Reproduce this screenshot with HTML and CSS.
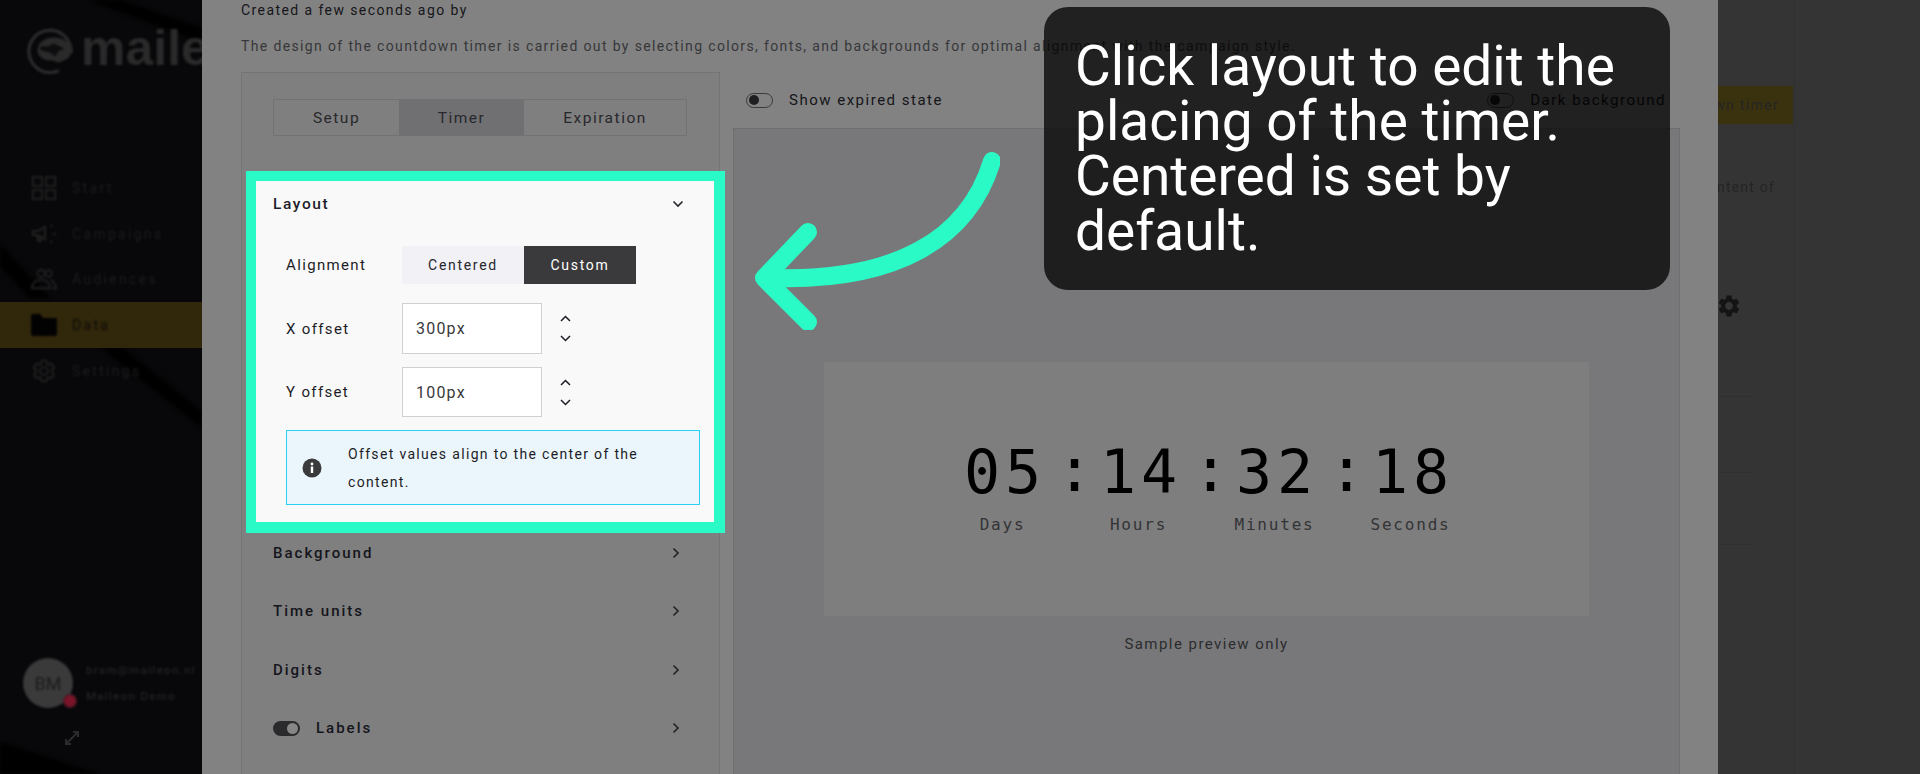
FILE: index.html
```html
<!DOCTYPE html>
<html lang="en">
<head>
<meta charset="utf-8">
<title>Countdown timer</title>
<link rel="stylesheet" href="styles.css">
</head>
<body>
<div class="app">
  <aside class="sidebar">
    <svg class="side-bands" width="202" height="774" viewBox="0 0 202 774"><path d="M88 0h32l82 28v14zM0 244l50 54H30L0 266zM100 347h22l66 53 14 12v16zM0 742l100 32H0z" fill="#000"/></svg>
    <div class="logo">
      <svg class="logo-mark" width="48" height="48" viewBox="0 0 50 50"><path d="M47 27A22 22 0 1 0 33 47" fill="none" stroke="#2a2a2b" stroke-width="3.500" stroke-linecap="round"/><path d="M47 27c0-10-8-15-18-15-10 0-17 6-17 13 0 8 8 11 14 11 4 0 7 3 9 2 2-2 12-3 12-11z" fill="#2a2a2b"/><path d="M15 21h9l4-3 7 3 5 3-6 2-4 6-4-4-11-3z" fill="#0d0d0f"/></svg>
      <span class="logo-name">maileon</span>
    </div>
    <nav class="nav">
      <div class="nav-item"><svg width="24" height="24" viewBox="0 0 24 24" fill="none" stroke="#202021" stroke-width="2"><path d="M1 1h9v9H1zM14 1h9v9h-9zM1 14h9v9H1zM14 14h9v9h-9z"/></svg><span>Start</span></div>
      <div class="nav-item"><svg width="26" height="24" viewBox="0 0 26 24" fill="none" stroke="#202021" stroke-width="2.200"><path d="M2 9h5l7-4v12l-7-4H2zM6 13l1 6h3l-1-5M20 3l1 2M20 19l1 2M22 12h3"/></svg><span>Campaigns</span></div>
      <div class="nav-item"><svg width="28" height="24" viewBox="0 0 28 24" fill="none" stroke="#202021" stroke-width="2"><circle cx="11" cy="6" r="4"/><circle cx="19" cy="6" r="3.500"/><path d="M1 22c0-6 5-9 10-9s9 3 10 9zM21 13c3 1 5 4 6 9h-4"/></svg><span>Audiences</span></div>
      <div class="nav-item nav-active"><svg width="26" height="22" viewBox="0 0 26 22"><path d="M0 2q0-2 2-2h7l3 4h12q2 0 2 2v14q0 2-2 2H2q-2 0-2-2z" fill="#020203"/></svg><span>Data</span></div>
      <div class="nav-item"><svg width="26" height="26" viewBox="0 0 24 24" fill="none" stroke="#202021" stroke-width="1.800"><path d="M19.14 12.94c.04-.3.06-.61.06-.94 0-.32-.02-.64-.07-.94l2.03-1.58c.18-.14.23-.41.12-.61l-1.92-3.32c-.12-.22-.37-.29-.59-.22l-2.39.96c-.5-.38-1.03-.7-1.62-.94l-.36-2.54c-.04-.24-.24-.41-.48-.41h-3.84c-.24 0-.43.17-.47.41l-.36 2.54c-.59.24-1.13.57-1.62.94l-2.39-.96c-.22-.08-.47 0-.59.22L2.74 8.87c-.12.21-.08.47.12.61l2.03 1.58c-.05.3-.09.63-.09.94s.02.64.07.94l-2.03 1.58c-.18.14-.23.41-.12.61l1.92 3.32c.12.22.37.29.59.22l2.39-.96c.5.38 1.03.7 1.62.94l.36 2.54c.05.24.24.41.48.41h3.84c.24 0 .44-.17.47-.41l.36-2.54c.59-.24 1.13-.56 1.62-.94l2.39.96c.22.08.47 0 .59-.22l1.92-3.32c.12-.22.07-.47-.12-.61l-2.01-1.58z"/><circle cx="12" cy="12" r="3.600"/></svg><span>Settings</span></div>
    </nav>
    <div class="user">
      <div class="avatar">BM<span class="avatar-badge"></span></div>
      <div class="user-text"><span>bram@maileon.nl</span><span>Maileon Demo</span></div>
    </div>
    <svg class="expand" width="16" height="16" viewBox="0 0 16 16" fill="none" stroke="#2b2b2c" stroke-width="2"><path d="M3 13L13 3M9 2h5v5M2 9v5h5"/></svg>
  </aside>

  <main class="modal">
    <p class="meta">Created a few seconds ago by</p>
    <p class="desc">The design of the countdown timer is carried out by selecting colors, fonts, and backgrounds for optimal alignment with the campaign style.</p>
    <div class="columns">
      <section class="panel">
        <div class="tabs">
          <div class="tab tab-setup">Setup</div>
          <div class="tab tab-timer">Timer</div>
          <div class="tab tab-exp">Expiration</div>
        </div>
        <div class="focus">
          <div class="acc-head"><span>Layout</span>
            <svg class="chev" width="12" height="8" viewBox="0 0 12 8" fill="none" stroke="#26262c" stroke-width="1.600"><path d="M1.500 1.500L6 6l4.500-4.500"/></svg>
          </div>
          <div class="form-row form-align">
            <span class="form-label">Alignment</span>
            <div class="seg"><span class="seg-off">Centered</span><span class="seg-on">Custom</span></div>
          </div>
          <div class="form-row form-x">
            <span class="form-label">X offset</span>
            <div class="field">300px</div>
            <div class="stepper">
              <svg width="11" height="7" viewBox="0 0 11 7" fill="none" stroke="#1d1d26" stroke-width="1.500"><path d="M1 6l4.500-4.500L10 6"/></svg>
              <svg width="11" height="7" viewBox="0 0 11 7" fill="none" stroke="#1d1d26" stroke-width="1.500"><path d="M1 1l4.500 4.500L10 1"/></svg>
            </div>
          </div>
          <div class="form-row form-y">
            <span class="form-label">Y offset</span>
            <div class="field">100px</div>
            <div class="stepper">
              <svg width="11" height="7" viewBox="0 0 11 7" fill="none" stroke="#1d1d26" stroke-width="1.500"><path d="M1 6l4.500-4.500L10 6"/></svg>
              <svg width="11" height="7" viewBox="0 0 11 7" fill="none" stroke="#1d1d26" stroke-width="1.500"><path d="M1 1l4.500 4.500L10 1"/></svg>
            </div>
          </div>
          <div class="info">
            <svg width="20" height="20" viewBox="0 0 20 20"><circle cx="10" cy="10" r="9.500" fill="#3a3a3c"/><rect x="8.800" y="8.500" width="2.400" height="6.500" fill="#fff"/><circle cx="10" cy="6" r="1.400" fill="#fff"/></svg>
            <p>Offset values align to the center of the content.</p>
          </div>
        </div>
        <div class="acc-list">
          <div class="acc-row"><span>Background</span><svg width="8" height="12" viewBox="0 0 8 12" fill="none" stroke="#222226" stroke-width="1.600"><path d="M1.500 1.500L6 6l-4.500 4.500"/></svg></div>
          <div class="acc-row"><span>Time units</span><svg width="8" height="12" viewBox="0 0 8 12" fill="none" stroke="#222226" stroke-width="1.600"><path d="M1.500 1.500L6 6l-4.500 4.500"/></svg></div>
          <div class="acc-row"><span>Digits</span><svg width="8" height="12" viewBox="0 0 8 12" fill="none" stroke="#222226" stroke-width="1.600"><path d="M1.500 1.500L6 6l-4.500 4.500"/></svg></div>
          <div class="acc-row"><span class="acc-toggle"><i class="toggle-on"></i>Labels</span><svg width="8" height="12" viewBox="0 0 8 12" fill="none" stroke="#222226" stroke-width="1.600"><path d="M1.500 1.500L6 6l-4.500 4.500"/></svg></div>
        </div>
      </section>
      <section class="preview-col">
        <div class="preview-bar">
          <label class="switch"><i class="toggle-off"></i>Show expired state</label>
          <label class="switch"><i class="toggle-off"></i>Dark background</label>
        </div>
        <div class="preview">
          <div class="timer-card">
            <div class="timer">
              <div class="unit"><b>05</b><span>Days</span></div><div class="colon">:</div>
              <div class="unit"><b>14</b><span>Hours</span></div><div class="colon">:</div>
              <div class="unit"><b>32</b><span>Minutes</span></div><div class="colon">:</div>
              <div class="unit"><b>18</b><span>Seconds</span></div>
            </div>
          </div>
          <p class="sample">Sample preview only</p>
        </div>
      </section>
    </div>
  </main>

  <aside class="strip">
    <div class="strip-btn"><span>Publish countdown timer</span></div>
    <p class="strip-text"><span>Edit the content of</span></p>
    <svg class="strip-gear" width="26" height="26" viewBox="0 0 24 24"><path fill="#141414" d="M19.14 12.94c.04-.3.06-.61.06-.94 0-.32-.02-.64-.07-.94l2.03-1.58c.18-.14.23-.41.12-.61l-1.920-3.320c-.12-.22-.37-.29-.59-.22l-2.390.96c-.5-.38-1.030-.7-1.620-.94l-.36-2.540c-.04-.24-.24-.41-.48-.41h-3.840c-.24 0-.43.17-.47.41l-.36 2.540c-.59.24-1.130.57-1.620.94l-2.390-.96c-.22-.08-.47 0-.59.22L2.740 8.870c-.12.21-.08.47.12.61l2.030 1.580c-.05.3-.09.63-.09.94s.02.64.07.94l-2.030 1.580c-.18.14-.23.41-.12.61l1.920 3.320c.12.22.37.29.59.22l2.390-.96c.5.38 1.030.7 1.620.94l.36 2.540c.05.24.24.41.48.41h3.840c.24 0 .44-.17.47-.41l.36-2.540c.59-.24 1.130-.56 1.620-.94l2.390.96c.22.08.47 0 .59-.22l1.920-3.320c.12-.22.07-.47-.12-.61l-2.010-1.580zM12 15.600c-1.980 0-3.600-1.620-3.600-3.600s1.620-3.600 3.600-3.600 3.600 1.620 3.600 3.600-1.620 3.600-3.600 3.600z"/></svg>
    <div class="strip-lines"><i></i><i></i><i></i></div>
  </aside>

  <div class="callout">Click layout to edit the placing of the timer. Centered is set by default.</div>
  <svg class="arrow" width="250" height="180" viewBox="750 150 250 180" fill="none" stroke="#2afbc6" stroke-width="18" stroke-linecap="round" stroke-linejoin="round"><path d="M992 161C968 240 895 281 775 278"/><path d="M808 232L764 278L808 322"/></svg>
</div>
</body>
</html>
```
FILE: styles.css
```css
* { box-sizing: border-box; }
html, body { margin: 0; height: 774px; overflow: hidden; }
body { font-family: Roboto, "Liberation Sans", sans-serif; background: #828282; }
p { margin: 0; }
i { display: block; }

.app { position: relative; display: flex; width: 1920px; height: 774px; overflow: hidden; }

/* Sidebar */
.sidebar { position: relative; flex: 0 0 202px; height: 774px; background: #08080a; overflow: hidden; }
.side-bands { position: absolute; left: 0; top: 0; filter: blur(2px); }
.logo { position: relative; display: flex; align-items: center; gap: 7px; padding: 26px 0 0 26px; white-space: nowrap; filter: blur(1.200px); }
.logo-mark { flex: none; }
.logo-name { font: 700 50px "Liberation Sans", sans-serif; color: #2a2a2b; line-height: 48px; margin-top: -4px; }
.nav { position: relative; display: flex; flex-direction: column; margin-top: 91px; }
.nav-item { display: flex; align-items: center; height: 45.800px; padding-left: 31px; gap: 15px; font-size: 14px; letter-spacing: 2.300px; color: #1c1c1d; }
.nav-item svg { flex: 0 0 26px; filter: blur(.8px); }
.nav-item span { filter: blur(1px); }
.nav-active { background: #31270b; color: #0c0c08; }
.user { position: absolute; left: 23px; top: 658px; display: flex; gap: 13px; align-items: center; filter: blur(.9px); }
.avatar { position: relative; display: flex; align-items: center; justify-content: center; width: 50px; height: 50px; border-radius: 50%; background: #3a3a3b; color: #1c1c1d; font-size: 18px; }
.avatar-badge { position: absolute; right: -4px; bottom: 0; width: 14px; height: 14px; border-radius: 50%; background: radial-gradient(#7a1428 45%, #3a1a22 75%); }
.user-text { display: flex; flex-direction: column; gap: 10px; font-size: 11.500px; font-weight: 500; letter-spacing: 1.300px; line-height: 16px; color: #232324; white-space: nowrap; }
.expand { position: absolute; left: 64px; top: 730px; filter: blur(.7px); }

/* Modal */
.modal { flex: 0 0 1516px; height: 774px; padding: 0 0 0 39px; background: #828282; overflow: hidden; }
.meta { font-size: 14px; letter-spacing: 1.420px; line-height: 20px; color: #16161a; white-space: nowrap; }
.desc { margin-top: 16px; font-size: 14px; letter-spacing: 1.365px; line-height: 20px; color: #37373a; white-space: nowrap; }
.columns { display: flex; margin-top: 16px; align-items: flex-start; }

.panel { flex: 0 0 479px; min-width: 0; height: 720px; padding-top: 26px; background: #7f7f7f; border: 1px solid #747476; }
.tabs { display: flex; width: 414px; height: 37px; margin-left: 31px; border: 1px solid #727274; font-size: 15.500px; letter-spacing: 1.500px; color: #28282c; }
.tab { display: flex; align-items: center; justify-content: center; }
.tab-setup { flex: 0 0 125px; }
.tab-timer { flex: 0 0 125px; background: #707072; }
.tab-exp { flex: 1; }

.focus { width: 479px; height: 362px; margin: 35px 0 0 4px; padding: 0 0 0 17px; border: solid #2afbc6; border-width: 10px 11px 11px 10px; background: #f9f9fa; color: #1d1d26; position: relative; z-index: 1; }
.acc-head { display: flex; align-items: center; justify-content: space-between; height: 46px; padding-right: 30px; font-size: 15.500px; font-weight: 500; letter-spacing: 1.600px; color: #1d1d2b; }
.form-row { display: flex; align-items: center; margin-left: 13px; font-size: 15px; letter-spacing: 1.350px; }
.form-label { flex: 0 0 116px; color: #1d1d26; }
.form-align { height: 38px; margin-top: 19px; }
.form-x { height: 51px; margin-top: 19px; }
.form-y { height: 50px; margin-top: 13px; }
.seg { display: flex; height: 38px; font-size: 14px; letter-spacing: 1.700px; }
.seg span { display: flex; align-items: center; justify-content: center; }
.seg-off { width: 122px; background: #f1f1f6; color: #26262c; }
.seg-on { width: 112px; background: #3a3a3c; color: #fff; }
.field { display: flex; align-items: center; width: 140px; height: 100%; padding-left: 13px; background: #fff; border: 1px solid #d0d0d0; color: #3a3a3c; font-size: 16px; letter-spacing: 1.200px; }
.stepper { display: flex; flex-direction: column; gap: 13px; margin-left: 18px; }
.stepper svg { display: block; }
.info { display: flex; align-items: center; gap: 26px; width: 414px; height: 75px; margin: 13px 0 0 13px; padding-left: 15px; background: #ebf6fc; border: 1px solid #2bd0f5; }
.info svg { flex: 0 0 20px; }
.info p { width: 310px; font-size: 14px; letter-spacing: 1.330px; line-height: 28px; color: #1d1d26; }

.acc-list { display: flex; flex-direction: column; gap: 18.400px; padding-left: 31px; }
.acc-row { display: flex; align-items: center; justify-content: space-between; width: 407px; height: 40px; font-size: 15px; font-weight: 500; letter-spacing: 2px; color: #15151c; }
.acc-row svg { display: block; }
.acc-toggle { display: flex; align-items: center; gap: 16px; }
.toggle-on { position: relative; width: 27px; height: 15px; border-radius: 8px; background: #2a2a2c; }
.toggle-on::after { content: ""; position: absolute; right: 2px; top: 2px; width: 11px; height: 11px; border-radius: 50%; background: #868686; }

.preview-col { flex: 0 0 947px; margin-left: 13px; }
.preview-bar { display: flex; justify-content: space-between; height: 56px; padding: 0 14px 0 13px; align-items: center; font-size: 15px; letter-spacing: 1.500px; color: #15151a; }
.switch { display: flex; align-items: center; gap: 16px; white-space: nowrap; }
.toggle-off { position: relative; width: 27px; height: 15px; border-radius: 8px; border: 1px solid #3a3a3c; }
.toggle-off::after { content: ""; position: absolute; left: 2px; top: 1.500px; width: 10px; height: 10px; border-radius: 50%; background: #1f1f21; }
.preview { height: 660px; padding: 233px 0 0 90px; background: #78787a; border: 1px solid #6f6f71; }
.timer-card { display: flex; justify-content: center; width: 765px; height: 254px; padding-top: 75px; background: #7e7e7e; }
.timer { display: flex; align-items: flex-start; font-family: "DejaVu Sans Mono", "Liberation Mono", monospace; }
.unit { display: flex; flex-direction: column; align-items: center; width: 100px; }
.unit b { font-weight: 400; font-size: 60px; line-height: 70px; letter-spacing: 5px; margin-right: -5px; color: #000; }
.unit span { margin-top: 8px; font-size: 16px; line-height: 20px; letter-spacing: 1.800px; color: #333336; }
.colon { width: 36px; padding-left: 4px; text-align: center; font-size: 60px; line-height: 66px; color: #000; }
.sample { margin-top: 18px; margin-right: 90px; text-align: center; font-size: 15px; letter-spacing: 1.450px; line-height: 20px; color: #2c2c2e; }

/* Right strip behind the modal */
.strip { position: relative; flex: 0 0 202px; height: 774px; background: #343434; overflow: hidden; }
.strip-btn { position: absolute; left: 0; top: 86px; display: flex; justify-content: flex-end; align-items: center; width: 75px; height: 38px; padding-right: 14px; background: #3a320f; overflow: hidden; white-space: nowrap; font-size: 14px; letter-spacing: 1.300px; color: #242424; filter: blur(.6px); }
.strip-text { position: absolute; left: 0; top: 177px; display: flex; justify-content: flex-end; width: 57px; overflow: hidden; white-space: nowrap; font-size: 14px; letter-spacing: 1.200px; line-height: 20px; color: #242424; filter: blur(.6px); }
.strip-gear { position: absolute; left: -2px; top: 293px; filter: blur(.5px); }
.strip-lines { position: absolute; left: 0; top: 0; width: 77px; height: 774px; border-right: 1px solid #303030; }
.strip-lines i { position: absolute; left: 0; width: 37px; height: 1px; background: #303030; }
.strip-lines i:nth-child(1) { top: 396px; }
.strip-lines i:nth-child(2) { top: 472px; }
.strip-lines i:nth-child(3) { top: 544px; }

/* Tutorial overlay */
.callout { position: absolute; left: 1044px; top: 7px; width: 626px; height: 283px; padding: 32px 30px 0 31px; border-radius: 24px; background: rgba(0, 0, 0, .75); color: #fff; font-size: 55px; line-height: 55px; }
.arrow { position: absolute; left: 750px; top: 150px; }
```
